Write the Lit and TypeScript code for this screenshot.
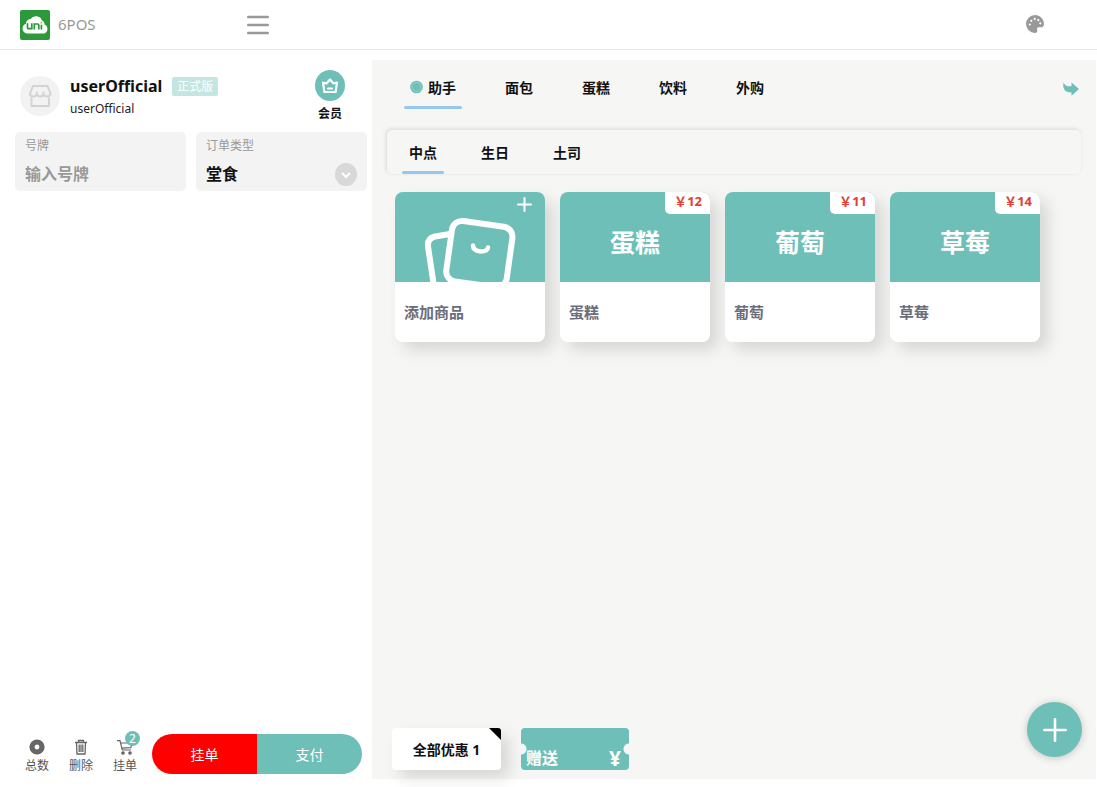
import { LitElement, html, css, nothing } from "lit";
import { customElement, property, state } from "lit/decorators.js";
import { classMap } from "lit/directives/class-map.js";

const base = css`
  :host {
    box-sizing: border-box;
    font-family: "Noto Sans", "Noto Sans CJK SC", sans-serif;
  }
  *,
  *::before,
  *::after {
    box-sizing: border-box;
  }
  button,
  input,
  select {
    font: inherit;
    color: inherit;
    border: 0;
    margin: 0;
    padding: 0;
    background: none;
  }
  button {
    cursor: pointer;
  }
  svg {
    display: block;
  }
`;

@customElement("pos-header")
class PosHeader extends LitElement {
  static styles = [
    base,
    css`
      :host {
        display: flex;
        align-items: center;
        height: 50px;
        padding: 0 52px 0 20px;
        border-bottom: 1px solid #e6e6e6;
        color: #999;
      }
      .brand {
        display: flex;
        align-items: center;
        gap: 8px;
        width: 227px;
        font-size: 15px;
        line-height: 20px;
      }
      .brand span {
        padding-bottom: 2px;
      }
      .theme {
        margin-left: auto;
        padding-bottom: 2px;
      }
    `,
  ];
  render() {
    return html`
      <div class="brand">
        <svg width="30" height="30" viewBox="0 0 30 30" aria-hidden="true">
          <rect width="30" height="30" rx="2" fill="#2b9939" />
          <path fill="#fff" d="M7 23.500a5 5 0 0 1-1-9.700a5 5 0 0 1 4.500-4.800a6.500 6.500 0 0 1 11.500 1.500a4 4 0 0 1 2.500 4a4.700 4.700 0 0 1-1 9z" />
          <path fill="none" stroke="#2b9939" stroke-width="1.700" d="M7.500 13.200v4.500q0 1 1 1h3.300v-5.500M14.300 19.500v-5.500h3.500q1 0 1 1v4.500M21.400 14.800v4.700" />
          <path stroke="#8cc63f" stroke-width="1.700" d="M21.400 11.800v1.700" />
        </svg>
        <span>6POS</span>
      </div>
      <button aria-label="菜单">
        <svg width="22" height="20" viewBox="0 0 22 20" stroke="#999" stroke-width="2.600" stroke-linecap="round">
          <path d="M1.300 2h19.400M1.300 10h19.400M1.300 18h19.400" />
        </svg>
      </button>
      <button class="theme" aria-label="主题">
        <svg width="20" height="20" viewBox="0 0 20 20">
          <path fill="#999" d="M10 1a9 9 0 1 0 0 18c1.400 0 2.300-.8 2.300-2.200c0-.7-.3-1.200-.3-1.800c0-1.200 1-1.700 2-1.700h2.300c1.700 0 2.700-1.500 2.700-3.300c0-5-4-9-9-9z" />
          <g fill="#fff">
            <circle cx="4.800" cy="10.500" r="1.100" /><circle cx="6.300" cy="6.800" r="1.100" />
            <circle cx="9.700" cy="4.900" r="1.100" /><circle cx="13.300" cy="6.100" r="1.100" />
            <circle cx="15.300" cy="9.300" r="1.100" />
          </g>
        </svg>
      </button>
    `;
  }
}

@customElement("pos-order")
class PosOrder extends LitElement {
  static styles = [
    base,
    css`
      :host {
        display: flex;
        flex-direction: column;
        padding: 10px 5px 5px 15px;
      }
      .user {
        display: flex;
        align-items: center;
        gap: 10px;
        height: 52px;
        padding: 0 22px 0 5px;
        margin-bottom: 10px;
      }
      .avatar {
        display: grid;
        place-items: center;
        width: 40px;
        height: 40px;
        border-radius: 50%;
        background: #f2f2f2;
      }
      .info {
        flex: 1;
        padding-top: 2px;
      }
      .name {
        display: flex;
        align-items: center;
        gap: 10px;
        font-size: 16px;
        font-weight: 700;
        line-height: 24px;
        color: #111;
      }
      .tag {
        padding: 0 5px;
        border-radius: 2px;
        background: #c3e6e2;
        color: #fff;
        font-size: 12px;
        font-weight: 400;
        line-height: 19px;
      }
      .account {
        font-size: 12px;
        line-height: 22px;
        color: #222;
      }
      .member {
        display: flex;
        flex-direction: column;
        align-items: center;
        gap: 5px;
        font-size: 12px;
        font-weight: 700;
        line-height: 16px;
        color: #111;
      }
      .crown {
        display: grid;
        place-items: center;
        width: 30px;
        height: 31px;
        border-radius: 50%;
        background: #6dbfb8;
      }
      .fields {
        display: grid;
        grid-template-columns: 1fr 1fr;
        gap: 10px;
      }
      .field {
        padding: 5px 10px 0;
        border-radius: 5px;
        background: #f3f3f3;
        height: 59px;
      }
      .field label {
        display: block;
        font-size: 12px;
        line-height: 18px;
        color: #999;
      }
      .row {
        display: flex;
        align-items: center;
        height: 38px;
      }
      .row input,
      .row select {
        flex: 1;
        width: 100%;
        min-width: 0;
        height: 26px;
        appearance: none;
        font-size: 16px;
        font-weight: 700;
        color: #111;
        outline: none;
      }
      .row input::placeholder {
        color: #999;
        opacity: 1;
      }
      .actions {
        display: flex;
        align-items: center;
        margin-top: auto;
        height: 40px;
        padding-right: 5px;
      }
      .tool {
        position: relative;
        display: flex;
        flex-direction: column;
        align-items: center;
        gap: 2px;
        width: 44px;
        padding-top: 5px;
        font-size: 12px;
        line-height: 18px;
        color: #555;
      }
      .badge {
        position: absolute;
        top: -3px;
        right: 7px;
        width: 15px;
        height: 15px;
        border-radius: 50%;
        background: #6dbfb8;
        color: #fff;
        font-size: 12px;
        line-height: 15px;
      }
      .pay {
        flex: 1;
        display: flex;
        height: 40px;
        margin-left: 5px;
        border-radius: 20px;
        overflow: hidden;
        color: #fff;
        font-size: 14px;
      }
      .pay button {
        flex: 1;
        background: #6dbfb8;
      }
      .pay .hold {
        background: #f00;
      }
    `,
  ];
  render() {
    return html`
      <div class="user">
        <div class="avatar">
          <svg width="24" height="24" viewBox="0 0 24 24" fill="none" stroke="#d3d3d3" stroke-width="2" stroke-linejoin="round" stroke-linecap="round">
            <path d="M5 2h14.500l3 7.500q0 3-3.500 3Q16.500 12.500 15.500 10.500Q14.500 12.500 12.200 12.500T8.800 10.500Q8 12.500 5 12.500T2 9.500zM3.500 14.500v7.500h17.500v-7.500M8.800 8.500v2M15.500 8.500v2" />
          </svg>
        </div>
        <div class="info">
          <div class="name">userOfficial <span class="tag">正式版</span></div>
          <div class="account">userOfficial</div>
        </div>
        <button class="member">
          <span class="crown">
            <svg width="18" height="18" viewBox="0 0 18 18" fill="none" stroke="#fff" stroke-width="2.200" stroke-linejoin="round" stroke-linecap="round">
              <path d="M2 5.500l3.500 1L9 2.500l3.500 4l3.500-1l-1.400 9.500H3.400zM7 11.500h4" />
            </svg>
          </span>
          会员
        </button>
      </div>
      <div class="fields">
        <div class="field">
          <label for="no">号牌</label>
          <div class="row"><input id="no" type="text" placeholder="输入号牌" /></div>
        </div>
        <div class="field">
          <label for="type">订单类型</label>
          <div class="row">
            <select id="type"><option>堂食</option></select>
            <svg width="22" height="23" viewBox="0 0 22 23" aria-hidden="true">
              <ellipse cx="11" cy="11.500" rx="11" ry="11.500" fill="#d8d8d8" />
              <path d="M7 10l4 4l4-4" fill="none" stroke="#fff" stroke-width="2" />
            </svg>
          </div>
        </div>
      </div>
      <div class="actions">
        <button class="tool">
          <svg width="16" height="16" viewBox="0 0 16 16"><circle cx="8" cy="8" r="5" fill="none" stroke="#666" stroke-width="5.200" /></svg>
          总数
        </button>
        <button class="tool">
          <svg width="16" height="16" viewBox="0 0 16 16" fill="none" stroke="#666" stroke-width="1.300">
            <path d="M2 3.500h12M5.500 3.500v-2h5v2M3.500 3.500l.5 11.500h8l.5-11.500M6.200 5.500v7.500M8 5.500v7.500M9.800 5.500v7.500" />
          </svg>
          删除
        </button>
        <button class="tool">
          <svg width="16" height="16" viewBox="0 0 16 16" fill="none" stroke="#666" stroke-width="1.200">
            <path d="M0 1.700h3l2.300 9.300h8.700M3.600 4h11.700l-1.500 4.700l-9 .5" />
            <circle cx="6" cy="14" r="1.200" fill="#666" /><circle cx="13" cy="14" r="1.200" fill="#666" />
          </svg>
          挂单
          <span class="badge">2</span>
        </button>
        <div class="pay">
          <button class="hold">挂单</button>
          <button>支付</button>
        </div>
      </div>
    `;
  }
}

@customElement("pos-card")
class PosCard extends LitElement {
  @property() name = "";
  @property() price = "";
  @property({ type: Boolean }) add = false;
  static styles = [
    base,
    css`
      :host {
        display: block;
        border-radius: 8px;
        box-shadow: 8px 8px 16px rgba(0, 0, 0, 0.13);
      }
      .card {
        position: relative;
        display: flex;
        flex-direction: column;
        width: 100%;
        height: 150px;
        border-radius: 8px;
        overflow: hidden;
        background: #fff;
        text-align: left;
      }
      .cover {
        display: grid;
        place-items: center;
        width: 100%;
        height: 90px;
        padding-top: 8px;
        background: #6dbfb8;
        color: #fff;
        font-size: 25px;
        font-weight: 700;
      }
      .cover.add {
        padding: 0;
      }
      .price {
        position: absolute;
        top: 0;
        right: 0;
        width: 45px;
        height: 22px;
        padding-right: 8px;
        border-bottom-left-radius: 5px;
        background: #fff;
        color: #e43d33;
        font-size: 13px;
        font-weight: 700;
        line-height: 18px;
        text-align: right;
      }
      .title {
        display: flex;
        align-items: center;
        flex: 1;
        padding: 0 9px 2px;
        color: #6a6d7c;
        font-size: 15px;
        font-weight: 700;
      }
    `,
  ];
  render() {
    return html`
      <button class="card">
        <span class=${classMap({ cover: true, add: this.add })}>
          ${this.add
            ? html`<svg width="150" height="90" viewBox="0 0 150 90" fill="none" stroke="#fff" stroke-linecap="round">
                <path stroke-width="2" d="M123 12.500h13M129.500 6v13" />
                <path stroke-width="6" d="M55 42l-15 2.500q-8 2-7 10l6 40" />
                <rect stroke-width="6" x="54" y="31.500" width="61" height="61" rx="10" transform="rotate(8 84 61)" />
                <path stroke-width="4.500" d="M78 53.500q0 5 7.500 6q7 0 7.500-4" />
              </svg>`
            : this.name}
        </span>
        ${this.price ? html`<span class="price">￥${this.price}</span>` : nothing}
        <span class="title">${this.name}</span>
      </button>
    `;
  }
}

@customElement("pos-catalog")
class PosCatalog extends LitElement {
  @state() private tab = 0;
  @state() private sub = 0;
  static styles = [
    base,
    css`
      :host {
        display: flex;
        flex-direction: column;
        min-width: 0;
        padding: 0 15px 9px;
        background: #f6f6f4;
      }
      .tabs {
        display: flex;
        align-items: center;
        gap: 37px;
        height: 56px;
        padding: 0 2px 0 17px;
        margin-bottom: 14px;
      }
      .tab {
        position: relative;
        display: flex;
        align-items: center;
        gap: 5px;
        height: 100%;
        font-size: 14px;
        font-weight: 700;
        color: #111;
      }
      .on::after {
        content: "";
        position: absolute;
        left: 0;
        right: 0;
        bottom: 0;
        height: 3px;
        border-radius: 2px;
        background: #95c7ef;
      }
      .tabs .tab {
        padding: 0 6px 2px;
      }
      .tabs .on::after {
        bottom: 7px;
      }
      .share {
        margin-left: auto;
        padding-top: 2px;
      }
      .subs {
        display: flex;
        gap: 30px;
        height: 44px;
        padding: 0 15px;
        border-radius: 5px;
        box-shadow: -1px -1px 4px rgba(0, 0, 0, 0.12);
      }
      .subs .tab {
        padding: 0 7px;
      }
      .grid {
        display: grid;
        grid-template-columns: repeat(auto-fill, 150px);
        gap: 15px;
        padding: 18px 8px;
      }
      .foot {
        display: flex;
        align-items: flex-end;
        gap: 20px;
        margin-top: auto;
        padding-left: 5px;
      }
      .coupon {
        position: relative;
        width: 109px;
        height: 42px;
        border-radius: 4px;
        background: #fff;
        font-size: 14px;
        font-weight: 700;
        color: #111;
        box-shadow: 8px 8px 16px rgba(0, 0, 0, 0.13);
      }
      .coupon svg {
        position: absolute;
        top: 0;
        right: 0;
      }
      .gift {
        display: flex;
        align-items: flex-end;
        justify-content: space-between;
        width: 108px;
        height: 42px;
        padding: 0 8px 0 5px;
        border-radius: 4px;
        background: radial-gradient(circle at 0 21px, #f6f6f4 5px, transparent 6px),
          radial-gradient(circle at 100% 21px, #f6f6f4 5px, transparent 6px), #6dbfb8;
        color: #fff;
        font-size: 16px;
        font-weight: 700;
        line-height: 24px;
      }
      .yen {
        font-size: 21px;
      }
      .fab {
        display: grid;
        place-items: center;
        width: 55px;
        height: 55px;
        margin: 0 -1px 13px auto;
        border-radius: 50%;
        background: #6dbfb8;
        box-shadow: 0 1px 8px rgba(0, 0, 0, 0.2);
      }
    `,
  ];
  render() {
    const tabs = ["助手", "面包", "蛋糕", "饮料", "外购"];
    const subs = ["中点", "生日", "土司"];
    const goods = [
      ["蛋糕", "12"],
      ["葡萄", "11"],
      ["草莓", "14"],
    ];
    const dot = html`<svg width="13" height="14" viewBox="0 0 13 14">
      <circle cx="6.500" cy="7" r="6.300" fill="#6dbfb8" />
      <circle cx="6.500" cy="7" r="4.500" fill="none" stroke="#a5d6d0" stroke-width=".8" />
    </svg>`;
    return html`
      <nav class="tabs">
        ${tabs.map(
          (t, i) => html`<button class=${classMap({ tab: true, on: i === this.tab })} @click=${() => (this.tab = i)}>
            ${i === 0 ? dot : nothing}${t}
          </button>`
        )}
        <button class="share" aria-label="分享">
          <svg width="16" height="14" viewBox="0 0 16 14">
            <path fill="#6dbfb8" d="M.5.500Q2 4.200 5.500 4.200H8.500V.500L16 7l-7.500 6.800V10.500Q4 10.500 2 8.500Q-.5 6 .5.500z" />
          </svg>
        </button>
      </nav>
      <nav class="subs">
        ${subs.map(
          (t, i) => html`<button class=${classMap({ tab: true, on: i === this.sub })} @click=${() => (this.sub = i)}>${t}</button>`
        )}
      </nav>
      <div class="grid">
        <pos-card add name="添加商品"></pos-card>
        ${goods.map(([n, p]) => html`<pos-card name=${n} price=${p}></pos-card>`)}
      </div>
      <div class="foot">
        <button class="coupon">
          全部优惠 1
          <svg width="12" height="12" viewBox="0 0 12 12"><path d="M0 0h9q3 0 3 3v9z" /></svg>
        </button>
        <button class="gift"><span>赠送</span><span class="yen">¥</span></button>
        <button class="fab" aria-label="添加">
          <svg width="24" height="24" viewBox="0 0 24 24" stroke="#fff" stroke-width="2.600" stroke-linecap="round">
            <path d="M1.300 12h21.400M12 1.300v21.400" />
          </svg>
        </button>
      </div>
    `;
  }
}

@customElement("app-root")
class AppRoot extends LitElement {
  static styles = [
    base,
    css`
      :host {
        display: flex;
        flex-direction: column;
        min-height: 100vh;
        background: #fff;
      }
      .main {
        flex: 1;
        display: grid;
        grid-template-columns: 372px minmax(0, 1fr);
        padding: 10px 1px 8px 0;
      }
    `,
  ];
  render() {
    return html`
      <pos-header></pos-header>
      <div class="main">
        <pos-order></pos-order>
        <pos-catalog></pos-catalog>
      </div>
    `;
  }
}
